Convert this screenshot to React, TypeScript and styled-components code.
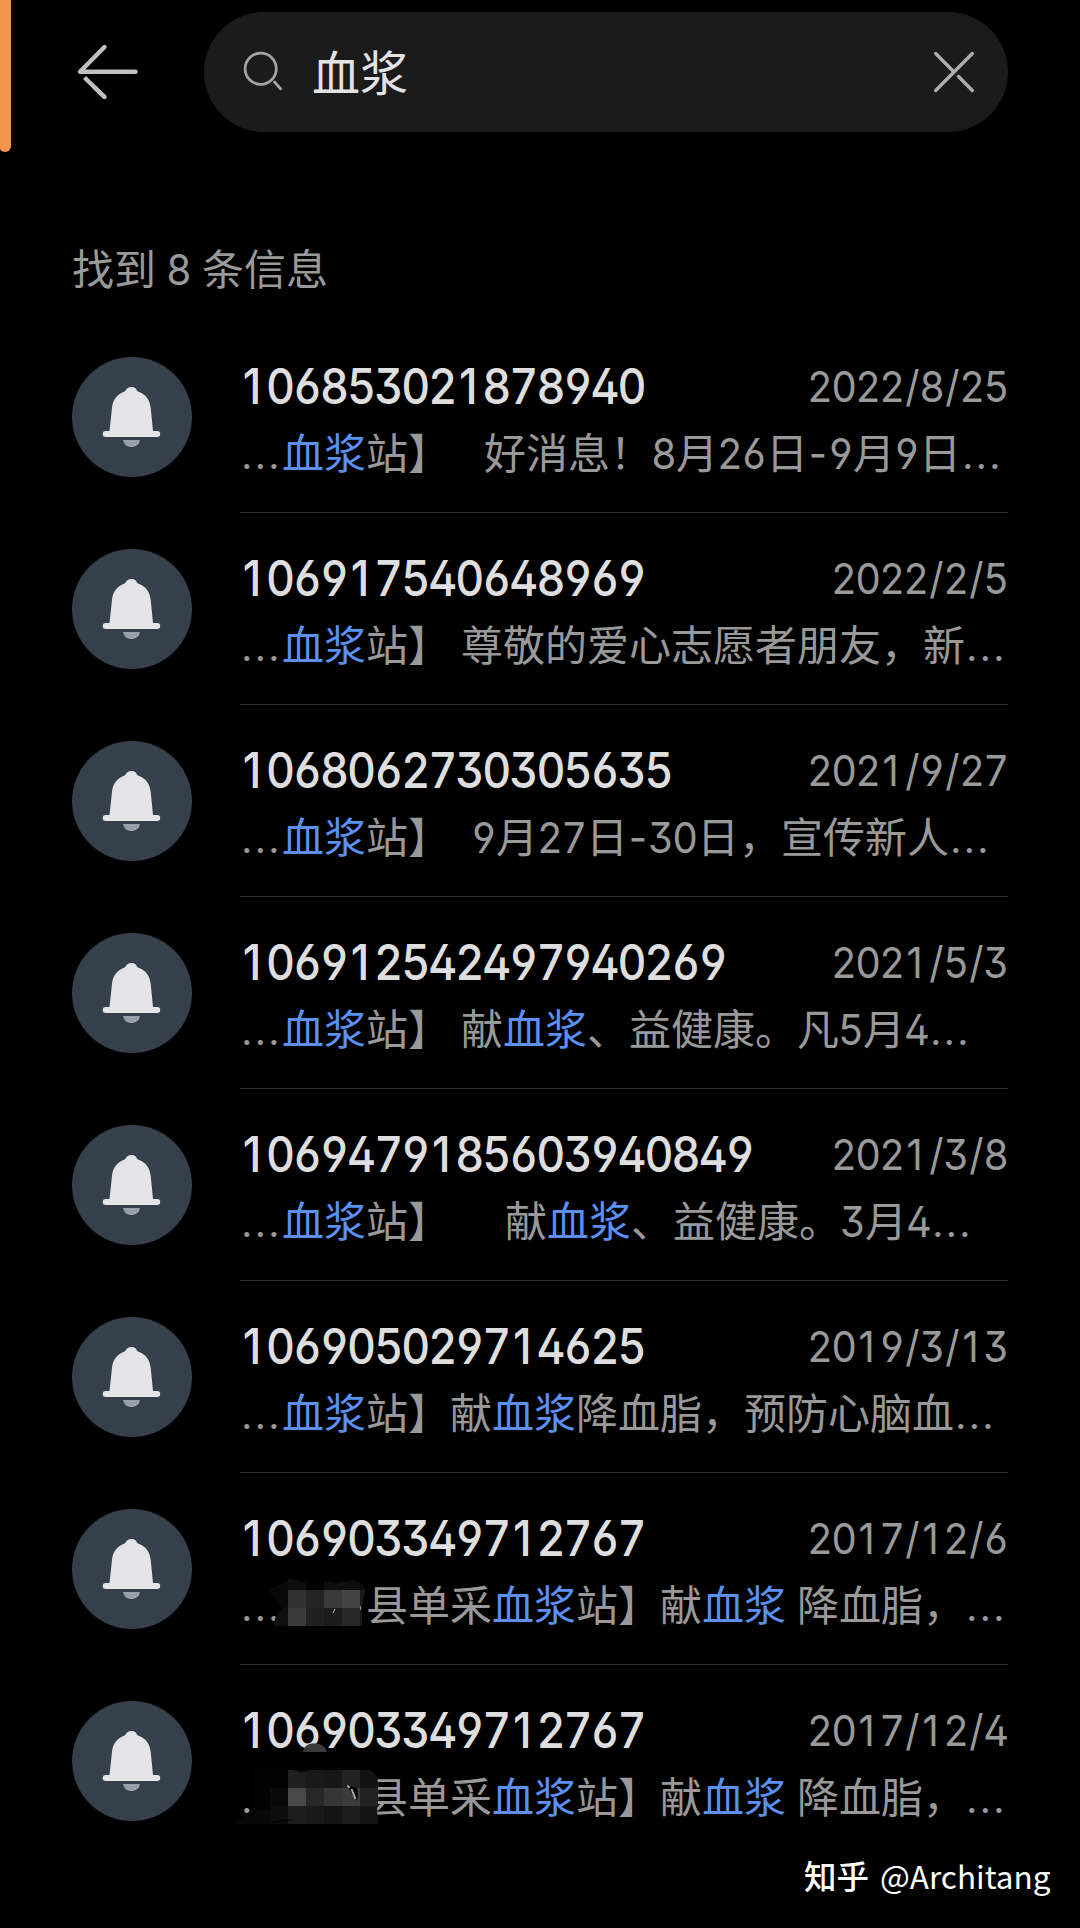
import React from "react";
import styled, { createGlobalStyle } from "styled-components";

const GlobalStyle = createGlobalStyle`
  * { box-sizing: border-box; }
  body { margin: 0; background: #000; }
`;

const cjk = `"Noto Sans CJK SC", "Noto Sans", sans-serif`;
const latin = `Inter, Roboto, sans-serif`;

const Screen = styled.main`
  position: relative;
  width: 1080px;
  height: 1928px;
  overflow: hidden;
  background: #000;
  color: #999;
  font-family: ${cjk};
`;

const EdgeMarker = styled.i`
  position: absolute;
  left: -1px;
  top: -10px;
  width: 11.5px;
  height: 162px;
  border-radius: 6px;
  background: #f2954d;
`;

const Header = styled.header`
  display: flex;
  align-items: center;
  padding: 12px 72px 0;
`;

const BackIcon = styled.svg`
  width: 72px;
  height: 72px;
  margin-right: 60px;
`;

const SearchBar = styled.div`
  display: flex;
  flex: 1;
  align-items: center;
  height: 120px;
  padding: 0 30px 0 34px;
  border-radius: 60px;
  background: #1b1b1b;
`;

const BarIcon = styled.svg`
  width: 48px;
  height: 48px;
`;

const Query = styled.div`
  flex: 1;
  padding: 0 0 4px 26px;
  color: #e3e3e3;
  font-size: 48px;
  line-height: 60px;
`;

const Summary = styled.h1`
  margin: 105px 72px 24px;
  font-size: 42px;
  font-weight: 400;
  line-height: 60px;
  white-space: pre;
`;

const Row = styled.article`
  display: flex;
  height: 192px;
  padding: 0 72px;
`;

const Avatar = styled.svg`
  width: 120px;
  height: 120px;
  margin: 36px 48px 0 0;
`;

const Body = styled.div<{ $last: boolean }>`
  width: 768px;
  padding-top: 36px;
  border-bottom: 1px solid ${(p) => (p.$last ? "transparent" : "#303030")};
`;

const TitleLine = styled.div`
  display: flex;
  justify-content: space-between;
  align-items: center;
  height: 60px;
`;

const DateCell = styled.div`
  display: flex;
  padding-bottom: 2px;
`;

const Digits = styled.span<{ $size: number; $weight: number; $width: number; $scale: number; $color?: string }>`
  display: inline-block;
  width: ${(p) => p.$width}px;
  color: ${(p) => p.$color ?? "inherit"};
  font: ${(p) => p.$weight} ${(p) => p.$size}px/1 ${latin};
  font-feature-settings: "tnum", "ss01";
  letter-spacing: -0.045em;
  white-space: nowrap;
  transform: scaleX(${(p) => p.$scale}) translateX(-0.0225em);
  transform-origin: 0 50%;
`;

const Glyph = styled.span<{ $em: number; $shift: number }>`
  display: inline-block;
  width: ${(p) => p.$em}em;
  padding-left: ${(p) => p.$shift}em;
  font-feature-settings: "ss01";
`;

const Snippet = styled.div`
  position: relative;
  height: 60px;
  margin-top: 4px;
  font-size: 42px;
  line-height: 60px;
  white-space: nowrap;
`;

const Run = styled.span<{ $hit?: boolean; $gap?: number }>`
  margin-left: ${(p) => p.$gap ?? 0}px;
  color: ${(p) => (p.$hit ? "#5b91f4" : "inherit")};
`;

const Dots = styled.span`
  display: inline-block;
  width: 42px;
  font: 300 48px/1 ${latin};
`;

const Mosaic = styled.svg<{ $top: number; $height: number }>`
  position: absolute;
  left: -18px;
  top: ${(p) => p.$top}px;
  width: 180px;
  height: ${(p) => p.$height}px;
`;

const Watermark = styled.footer`
  position: absolute;
  left: 804px;
  top: 1851px;
  display: flex;
  gap: 11px;
  color: #fff;
  font-size: 31.5px;
  line-height: 48px;
`;

const Brand = styled.span`
  font-size: 32.5px;
  font-weight: 500;
`;

const narrow: Record<string, [number, number]> = {
  "1": [0.602, 0.083],
  "/": [0.401, 0.05],
  "-": [0.527, 0.04],
};

function Numerals({ text, kind }: { text: string; kind: "title" | "plain" }) {
  const unit = kind === "title" ? 27 : 24;
  const size = kind === "title" ? 49.5 : 43;
  const width = [...text].reduce((sum, c) => sum + (c === "/" ? 16 : c === "-" ? 21 : unit), 0);
  return (
    <Digits
      $size={size}
      $weight={kind === "title" ? 500 : 400}
      $width={width}
      $scale={unit / (size * 0.602)}
      $color={kind === "title" ? "#dedede" : undefined}
    >
      {text.split(/([1/-])/).map((part, i) =>
        narrow[part] ? (
          <Glyph key={i} $em={narrow[part][0]} $shift={narrow[part][1]}>{part}</Glyph>
        ) : (
          part
        )
      )}
    </Digits>
  );
}

type Part = { t: string; gap?: number };
type Message = { from: string; date: string; lead?: number; parts: Part[] };

const messages: Message[] = [
  { from: "106853021878940", date: "2022/8/25", parts: [{ t: "血浆站】" }, { t: "好消息！8月26日-9月9日", gap: 34 }] },
  { from: "106917540648969", date: "2022/2/5", parts: [{ t: "血浆站】" }, { t: "尊敬的爱心志愿者朋友，新", gap: 11 }] },
  { from: "1068062730305635", date: "2021/9/27", parts: [{ t: "血浆站】" }, { t: "9月27日-30日，宣传新人", gap: 22 }] },
  { from: "106912542497940269", date: "2021/5/3", parts: [{ t: "血浆站】" }, { t: "献血浆、益健康。凡5月4", gap: 11 }] },
  { from: "1069479185603940849", date: "2021/3/8", parts: [{ t: "血浆站】" }, { t: "献血浆、益健康。3月4", gap: 55 }] },
  { from: "106905029714625", date: "2019/3/13", parts: [{ t: "血浆站】献血浆降血脂，预防心脑血" }] },
  { from: "106903349712767", date: "2017/12/6", lead: 84, parts: [{ t: "县单采血浆站】献血浆" }, { t: "降血脂，", gap: 11 }] },
  { from: "106903349712767", date: "2017/12/4", lead: 84, parts: [{ t: "县单采血浆站】献血浆" }, { t: "降血脂，", gap: 11 }] },
];

function renderPart({ t, gap = 0 }: Part, lead: number) {
  return t
    .split(/(血浆|[\d-]+)/)
    .filter(Boolean)
    .map((piece, i) => (
      <Run key={i} $hit={piece === "血浆"} $gap={i === 0 ? gap + lead : 0}>
        {/^[\d-]+$/.test(piece) ? <Numerals text={piece} kind="plain" /> : piece}
      </Run>
    ));
}

function Cells({ x, y, fills }: { x: number; y: number; fills: string[] }) {
  return (
    <>
      {fills.map((fill, i) => (
        <rect key={i} x={x + i * 18} y={y} width={18} height={18} fill={fill} />
      ))}
    </>
  );
}

function MosaicUpper() {
  return (
    <Mosaic $top={-8} $height={75} viewBox="222 1565 180 75">
      <path d="M268 1590l20-9v45h-15l3-10 6-8z" fill="#080808" />
      <path d="M288 1590v-12l18 5v7zM324 1590v-9l12 2 18-3 8 4 4 6z" fill="#0e0e0e" />
      <path d="M276 1616l6-8h6v18h-14z" fill="#0f0f0f" />
      <g shapeRendering="crispEdges">
        <Cells x={288} y={1590} fills={["#303030", "#242424", "#3a3a3a", "#444"]} />
        <Cells x={288} y={1608} fills={["#3b3b3b", "#202020", "#1b1b1b", "#272727"]} />
      </g>
      <path d="M360 1590h5l-3 18v18h-2z" fill="#1a1a1a" />
      <path d="M333 1613l2-4" stroke="#999" strokeWidth="1.200" />
      <path d="M360.500 1606v4" stroke="#888" strokeWidth="1" />
    </Mosaic>
  );
}

function MosaicLower() {
  return (
    <Mosaic $top={-30} $height={95} viewBox="222 1735 180 95">
      <path d="M254 1767h102v57H254z" fill="#020202" />
      <path d="M303 1752c1-11 20-12 24 0z" fill="#3a3a3a" />
      <path d="M234 1824l18-14h18v14z" fill="#070707" />
      <g shapeRendering="crispEdges">
        <Cells x={270} y={1788} fills={["#090909", "#484848", "#272727", "#353535", "#3b3b3b"]} />
        <Cells x={270} y={1806} fills={["#0d0d0d", "#1d1d1d", "#191919", "#141414", "#1d1d1d"]} />
        <Cells x={288} y={1770} fills={["#202020", "#191919", "#171717", "#222"]} />
      </g>
      <path d="M360 1770h10q7 4 8 12v6h-18z" fill="#131313" />
      <path d="M360 1788h18v18h-18z" fill="#222" />
      <path d="M360 1806h17l1 18h-18z" fill="#141414" />
      <path d="M294 1770q7 5 14 0z" fill="#080808" />
      <path d="M270 1823q12-5 26-3z" fill="#050505" />
      <path d="M347 1786l10 2 1 6-1 7z" fill="#050505" />
      <path d="M347.500 1785.500l2 2.500M351.500 1789l4 10" stroke="#aaa" strokeWidth="2" />
    </Mosaic>
  );
}

function BellAvatar() {
  return (
    <Avatar viewBox="0 0 120 120">
      <circle cx="60" cy="60" r="60" fill="#36404c" />
      <path
        d="M59.500 30c3 0 4.700 1.600 6 4.200C74 37 78 43 78.700 51L81 74h4.200a2.900 2.900 0 0 1 0 6H33.700a2.900 2.900 0 0 1 0-6H37.500l2.500-23C40.500 43 45 37 53 34.200 54.400 31.600 56.500 30 59.500 30z"
        fill="#e3e5e7"
      />
      <path d="M51 83h17c-.8 4.500-4 7-8.500 7s-7.700-2.500-8.500-7z" fill="#9ba1ab" />
    </Avatar>
  );
}

export default function App() {
  return (
    <Screen>
      <GlobalStyle />
      <EdgeMarker />
      <Header>
        <BackIcon viewBox="72 36 72 72" fill="none" stroke="#bfbfbf" strokeWidth="4.400" strokeLinecap="round" strokeLinejoin="round">
          <path d="M104.500 47L80 71.700H135.500" />
          <path d="M104.500 97L84.500 77.500" strokeLinecap="butt" />
          <path d="M104.500 97L95 87.700" />
        </BackIcon>
        <SearchBar>
          <BarIcon viewBox="0 0 48 48" fill="none" stroke="#a3a3a3" strokeWidth="2.800" strokeLinecap="round">
            <circle cx="22.700" cy="20.700" r="15.600" />
            <path d="M36.500 34L42.600 40.700" />
          </BarIcon>
          <Query>血浆</Query>
          <BarIcon viewBox="930 48 48 48" fill="none" stroke="#adadad" strokeWidth="3.400" strokeLinecap="round">
            <path d="M972.300 53.500L935.700 90.500M935.700 53.500L953 71M958.500 76.500L972.300 90.500" />
          </BarIcon>
        </SearchBar>
      </Header>
      <Summary>
        找到<Run $gap={10.5}><Numerals text="8" kind="plain" /></Run><Run $gap={11.5}>条信息</Run>
      </Summary>
      {messages.map((m, i) => (
        <Row key={i}>
          <BellAvatar />
          <Body $last={i === messages.length - 1}>
            <TitleLine>
              <Numerals text={m.from} kind="title" />
              <DateCell>
                <Numerals text={m.date} kind="plain" />
              </DateCell>
            </TitleLine>
            <Snippet>
              <Dots>…</Dots>
              {m.parts.map((p, j) => (
                <React.Fragment key={j}>{renderPart(p, j === 0 ? m.lead ?? 0 : 0)}</React.Fragment>
              ))}
              <Dots>…</Dots>
              {i === 6 && <MosaicUpper />}
              {i === 7 && <MosaicLower />}
            </Snippet>
          </Body>
        </Row>
      ))}
      <Watermark>
        <Brand>知乎</Brand>
        <span>@Architang</span>
      </Watermark>
    </Screen>
  );
}
